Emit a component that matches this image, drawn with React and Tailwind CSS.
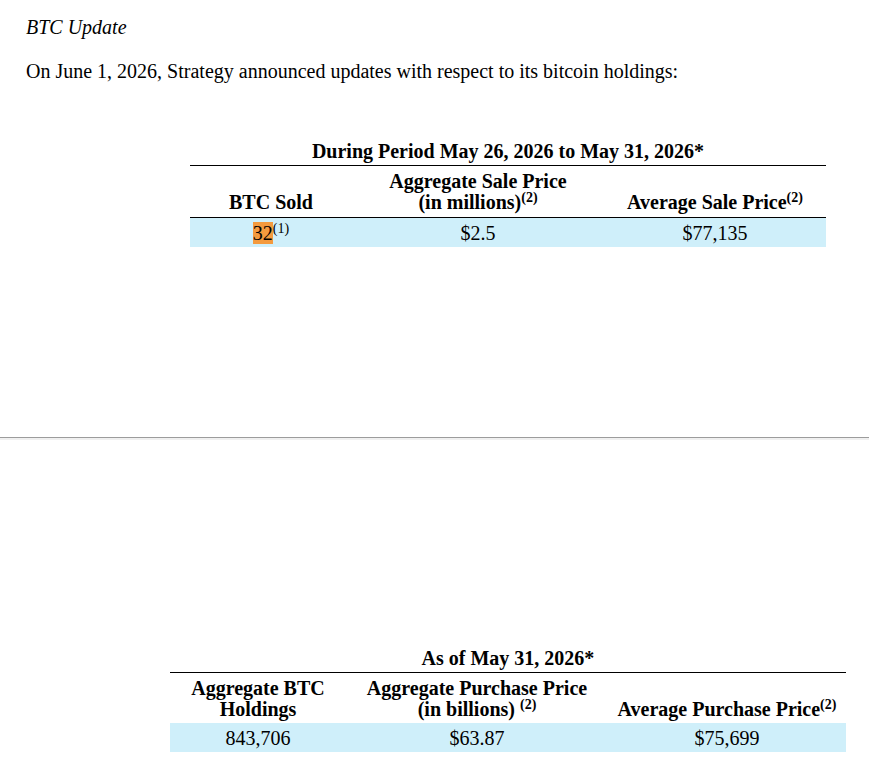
const serif = { fontFamily: '"Liberation Serif", "Times New Roman", serif' };

const Sup = ({ children, space }) => (
  <sup className={`text-[14px] font-bold ${space ? 'ml-[5px]' : ''}`}>{children}</sup>
);

const PeriodTable = () => (
  <div className="ml-[190px] w-[636px]">
    <div className="text-center font-bold leading-[23px]">
      During Period May 26, 2026 to May 31, 2026*
    </div>
    <div className="mt-[2px] border-t border-black" />
    <div className="grid grid-cols-[162px_252px_222px] items-end pt-[5px] pb-[4px] font-bold leading-[21px]">
      <div className="text-center">BTC Sold</div>
      <div className="text-center">
        Aggregate Sale Price
        <br />
        (in millions)<Sup>(2)</Sup>
      </div>
      <div className="text-center">
        Average Sale Price<Sup>(2)</Sup>
      </div>
    </div>
    <div className="border-t border-black" />
    <div className="grid h-[29px] grid-cols-[162px_252px_222px] items-center bg-[#cfeffa]">
      <div className="text-center">
        <span className="bg-[#f49a3e]">32</span>
        <sup className="text-[14px]">(1)</sup>
      </div>
      <div className="text-center">$2.5</div>
      <div className="text-center">$77,135</div>
    </div>
  </div>
);

const HoldingsTable = () => (
  <div className="ml-[170px] w-[676px]">
    <div className="text-center font-bold leading-[23px]">As of May 31, 2026*</div>
    <div className="mt-[2px] border-t border-black" />
    <div className="grid grid-cols-[176px_262px_238px] items-end pt-[5px] pb-[3px] font-bold leading-[21px]">
      <div className="text-center">
        Aggregate BTC
        <br />
        Holdings
      </div>
      <div className="text-center">
        Aggregate Purchase Price
        <br />
        (in billions)<Sup space>(2)</Sup>
      </div>
      <div className="text-center">
        Average Purchase Price<Sup>(2)</Sup>
      </div>
    </div>
    <div className="grid h-[29px] grid-cols-[176px_262px_238px] items-center bg-[#cfeffa]">
      <div className="text-center">843,706</div>
      <div className="text-center">$63.87</div>
      <div className="text-center">$75,699</div>
    </div>
  </div>
);

export default function App() {
  return (
    <div className="min-h-screen bg-white text-[20px] text-black" style={serif}>
      <div className="px-[26px] pt-[16px]">
        <p className="italic leading-[23px]">BTC Update</p>
        <p className="mt-[21px] leading-[23px]">
          On June 1, 2026, Strategy announced updates with respect to its bitcoin holdings:
        </p>
      </div>

      <div className="mt-[57px]">
        <PeriodTable />
      </div>

      <div className="mt-[190px] border-t border-[#9c9c9c]" />
      <div className="h-[2px] bg-[#f0f0f0]" />

      <div className="mt-[207px]">
        <HoldingsTable />
      </div>
    </div>
  );
}
